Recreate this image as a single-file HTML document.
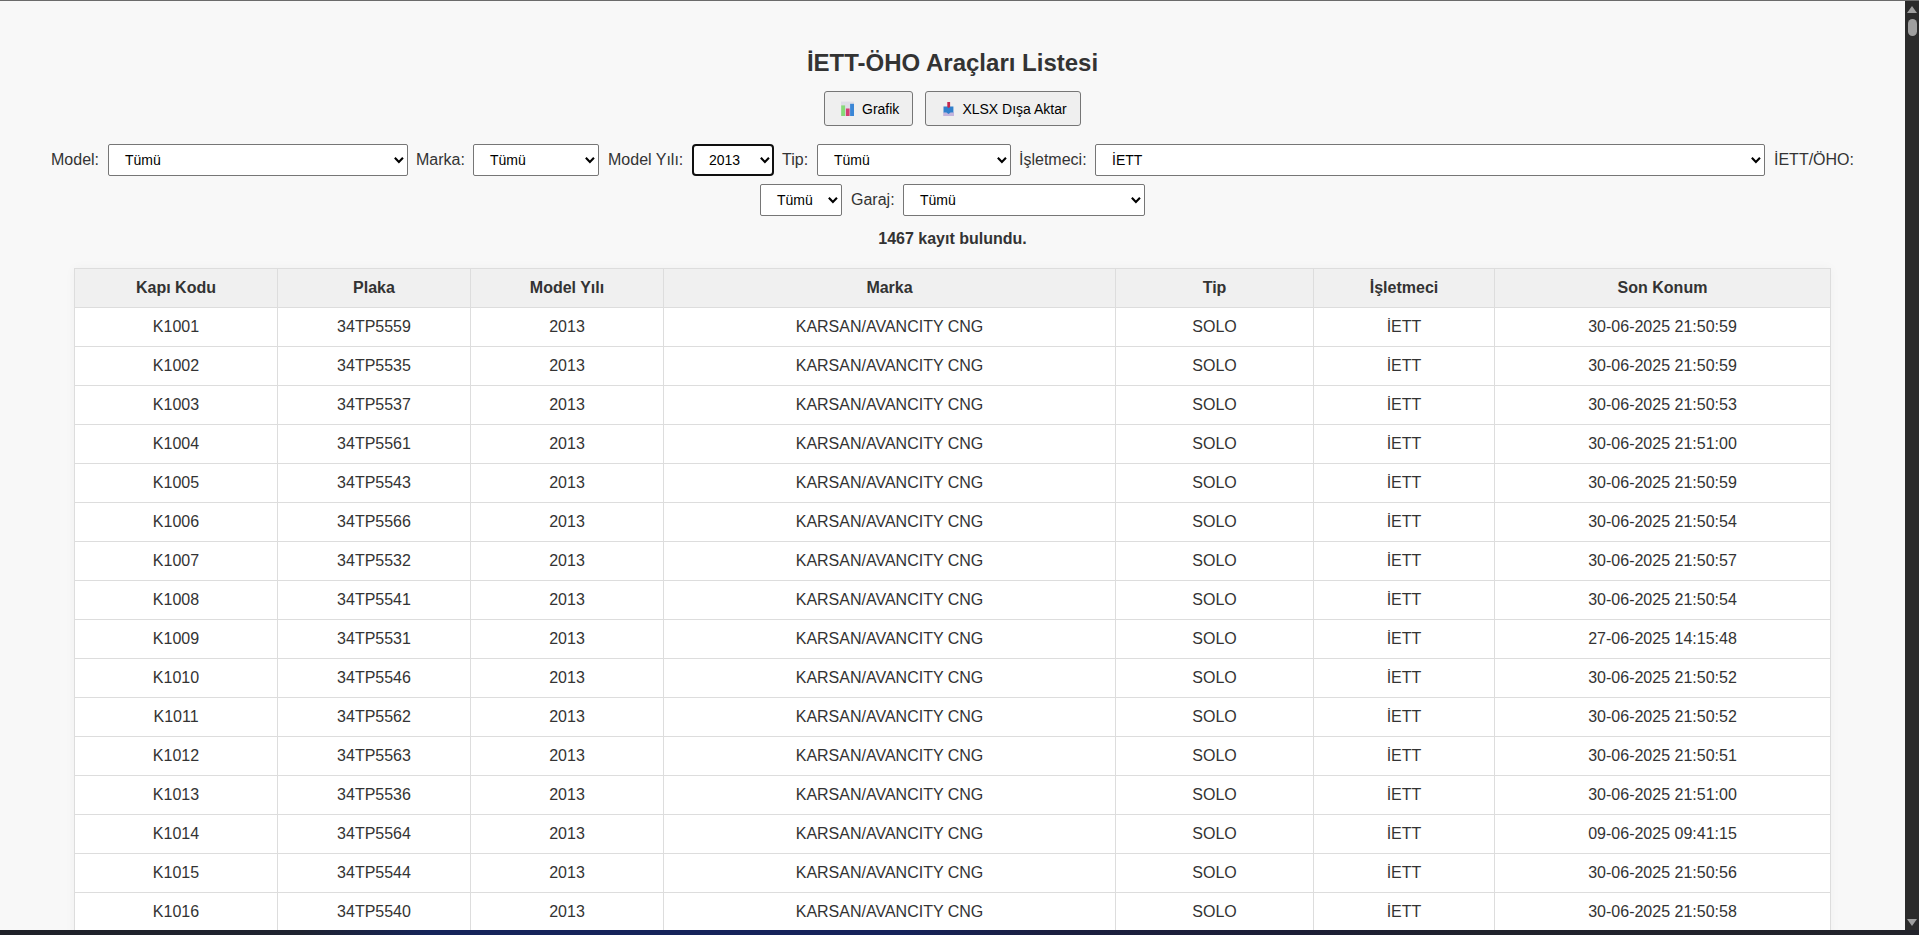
<!DOCTYPE html>
<html lang="tr">
<head>
<meta charset="utf-8">
<title>İETT-ÖHO Araçları Listesi</title>
<style>
html,body{margin:0;padding:0;}
html{width:1919px;height:935px;overflow:hidden;background:#f8f8f8;}
body{position:relative;width:1919px;height:935px;overflow:hidden;font-family:"Liberation Sans",sans-serif;color:#333;background:#f8f8f8;font-size:16px;}
#page{position:absolute;left:0;top:0;width:1905px;height:930px;overflow:hidden;}
#topline{position:absolute;left:0;top:0;width:1919px;height:1px;background:#6b6b6b;z-index:5;}
#sb{position:absolute;left:1905px;top:1px;width:14px;height:929px;background:#2b2b2b;z-index:4;}
#sb .thumb{position:absolute;left:3px;top:18px;width:9px;height:17px;border-radius:5px;background:#9f9f9f;}
#sb .up{position:absolute;left:2px;top:5px;width:0;height:0;border-left:5px solid transparent;border-right:5px solid transparent;border-bottom:7px solid #9f9f9f;}
#sb .down{position:absolute;left:2px;bottom:4px;width:0;height:0;border-left:5px solid transparent;border-right:5px solid transparent;border-top:7px solid #9f9f9f;}
#bottombar{position:absolute;left:0;top:930px;width:1919px;height:5px;background:linear-gradient(90deg,#1f2128 0,#1f2330 300px,#15245a 430px,#15225a 900px,#1b1f40 1050px,#1c1e36 1300px,#20222c 1480px,#22232b 1919px);z-index:6;}
h2{position:absolute;left:0;top:49px;width:1905px;margin:0;text-align:center;font-size:24px;line-height:27px;font-weight:bold;color:#333;}
.btn{position:absolute;box-sizing:border-box;height:35px;top:91px;border:1px solid #767676;border-radius:3px;background:#efefef;color:#000;font-family:"Liberation Sans",sans-serif;font-size:14px;padding:0;text-align:left;}
.btn svg{position:absolute;top:9px;}
.btn span{position:absolute;top:9px;line-height:16px;white-space:nowrap;}
.lbl{position:absolute;font-size:16px;line-height:18px;white-space:nowrap;color:#333;}
.sel{position:absolute;box-sizing:border-box;height:32px;border:1px solid #767676;border-radius:2px;background:#fff;color:#000;font-size:14px;line-height:30px;padding-left:16px;white-space:nowrap;}
.sel svg{position:absolute;right:3px;top:12px;}
.sel.focus{border:2px solid #101010;border-radius:4px;line-height:28px;padding-left:15px;}
.sel.focus svg{right:2px;top:11px;}
#count{position:absolute;left:0;top:230px;width:1905px;text-align:center;font-weight:bold;font-size:16px;line-height:18px;}
table{position:absolute;left:74px;top:268px;width:1756px;border-collapse:collapse;table-layout:fixed;background:#fff;box-shadow:0 0 10px rgba(0,0,0,0.04);}
th,td{border:1px solid #ddd;padding:10px;text-align:center;font-size:16px;line-height:18px;height:18px;color:#333;}
th{background:#f0f0f0;font-weight:bold;}
</style>
</head>
<body>
<div id="page">
<h2>İETT-ÖHO Araçları Listesi</h2>
<button class="btn" style="left:824px;width:89px;"><svg width="15" height="16" viewBox="0 0 15 16" style="left:15px"><rect x="1" y="0.6" width="13" height="14.4" fill="#dedee7"/><rect x="1.2" y="4.4" width="3.9" height="10.6" fill="#86da78"/><rect x="5.9" y="7.5" width="3.7" height="7.5" fill="#d43d72"/><rect x="10.1" y="2.8" width="3.9" height="12.2" fill="#3a86d6"/></svg><span style="left:37px">Grafik</span></button>
<button class="btn" style="left:925px;width:156px;"><svg width="14" height="16" viewBox="0 0 14 16" style="left:16px"><path d="M1.2 11.2 H12 V15 H1.2 Z" fill="#c3b4dd"/><path d="M1.5 5.4 H11.4 V11.6 H8.6 L6.5 13 L4.4 11.6 H1.5 Z" fill="#3080cc"/><path d="M5.3 1 H8.1 V6 L6.7 7 L5.3 6 Z" fill="#c4274f"/></svg><span style="left:36.4px">XLSX Dışa Aktar</span></button>

<span class="lbl" style="left:51px;top:151px">Model:</span>
<div class="sel" style="left:108px;top:144px;width:300px">Tümü<svg width="10" height="7" viewBox="0 0 10 7"><path d="M0.85 0.75 L4.9 5 L8.95 0.75" fill="none" stroke="#000" stroke-width="2.1"/></svg></div>
<span class="lbl" style="left:416px;top:151px">Marka:</span>
<div class="sel" style="left:473px;top:144px;width:126px">Tümü<svg width="10" height="7" viewBox="0 0 10 7"><path d="M0.85 0.75 L4.9 5 L8.95 0.75" fill="none" stroke="#000" stroke-width="2.1"/></svg></div>
<span class="lbl" style="left:608px;top:151px">Model Yılı:</span>
<div class="sel focus" style="left:692px;top:144px;width:82px">2013<svg width="10" height="7" viewBox="0 0 10 7"><path d="M0.85 0.75 L4.9 5 L8.95 0.75" fill="none" stroke="#000" stroke-width="2.1"/></svg></div>
<span class="lbl" style="left:782px;top:151px">Tip:</span>
<div class="sel" style="left:817px;top:144px;width:194px">Tümü<svg width="10" height="7" viewBox="0 0 10 7"><path d="M0.85 0.75 L4.9 5 L8.95 0.75" fill="none" stroke="#000" stroke-width="2.1"/></svg></div>
<span class="lbl" style="left:1019px;top:151px">İşletmeci:</span>
<div class="sel" style="left:1095px;top:144px;width:670px">İETT<svg width="10" height="7" viewBox="0 0 10 7"><path d="M0.85 0.75 L4.9 5 L8.95 0.75" fill="none" stroke="#000" stroke-width="2.1"/></svg></div>
<span class="lbl" style="left:1774px;top:151px">İETT/ÖHO:</span>
<div class="sel" style="left:760px;top:184px;width:82px">Tümü<svg width="10" height="7" viewBox="0 0 10 7"><path d="M0.85 0.75 L4.9 5 L8.95 0.75" fill="none" stroke="#000" stroke-width="2.1"/></svg></div>
<span class="lbl" style="left:851px;top:191px">Garaj:</span>
<div class="sel" style="left:903px;top:184px;width:242px">Tümü<svg width="10" height="7" viewBox="0 0 10 7"><path d="M0.85 0.75 L4.9 5 L8.95 0.75" fill="none" stroke="#000" stroke-width="2.1"/></svg></div>

<div id="count">1467 kayıt bulundu.</div>

<table>
<colgroup><col style="width:203px"><col style="width:193px"><col style="width:193px"><col style="width:452px"><col style="width:198px"><col style="width:181px"><col style="width:336px"></colgroup>
<thead><tr><th>Kapı Kodu</th><th>Plaka</th><th>Model Yılı</th><th>Marka</th><th>Tip</th><th>İşletmeci</th><th>Son Konum</th></tr></thead>
<tbody>
<tr><td>K1001</td><td>34TP5559</td><td>2013</td><td>KARSAN/AVANCITY CNG</td><td>SOLO</td><td>İETT</td><td>30-06-2025 21:50:59</td></tr>
<tr><td>K1002</td><td>34TP5535</td><td>2013</td><td>KARSAN/AVANCITY CNG</td><td>SOLO</td><td>İETT</td><td>30-06-2025 21:50:59</td></tr>
<tr><td>K1003</td><td>34TP5537</td><td>2013</td><td>KARSAN/AVANCITY CNG</td><td>SOLO</td><td>İETT</td><td>30-06-2025 21:50:53</td></tr>
<tr><td>K1004</td><td>34TP5561</td><td>2013</td><td>KARSAN/AVANCITY CNG</td><td>SOLO</td><td>İETT</td><td>30-06-2025 21:51:00</td></tr>
<tr><td>K1005</td><td>34TP5543</td><td>2013</td><td>KARSAN/AVANCITY CNG</td><td>SOLO</td><td>İETT</td><td>30-06-2025 21:50:59</td></tr>
<tr><td>K1006</td><td>34TP5566</td><td>2013</td><td>KARSAN/AVANCITY CNG</td><td>SOLO</td><td>İETT</td><td>30-06-2025 21:50:54</td></tr>
<tr><td>K1007</td><td>34TP5532</td><td>2013</td><td>KARSAN/AVANCITY CNG</td><td>SOLO</td><td>İETT</td><td>30-06-2025 21:50:57</td></tr>
<tr><td>K1008</td><td>34TP5541</td><td>2013</td><td>KARSAN/AVANCITY CNG</td><td>SOLO</td><td>İETT</td><td>30-06-2025 21:50:54</td></tr>
<tr><td>K1009</td><td>34TP5531</td><td>2013</td><td>KARSAN/AVANCITY CNG</td><td>SOLO</td><td>İETT</td><td>27-06-2025 14:15:48</td></tr>
<tr><td>K1010</td><td>34TP5546</td><td>2013</td><td>KARSAN/AVANCITY CNG</td><td>SOLO</td><td>İETT</td><td>30-06-2025 21:50:52</td></tr>
<tr><td>K1011</td><td>34TP5562</td><td>2013</td><td>KARSAN/AVANCITY CNG</td><td>SOLO</td><td>İETT</td><td>30-06-2025 21:50:52</td></tr>
<tr><td>K1012</td><td>34TP5563</td><td>2013</td><td>KARSAN/AVANCITY CNG</td><td>SOLO</td><td>İETT</td><td>30-06-2025 21:50:51</td></tr>
<tr><td>K1013</td><td>34TP5536</td><td>2013</td><td>KARSAN/AVANCITY CNG</td><td>SOLO</td><td>İETT</td><td>30-06-2025 21:51:00</td></tr>
<tr><td>K1014</td><td>34TP5564</td><td>2013</td><td>KARSAN/AVANCITY CNG</td><td>SOLO</td><td>İETT</td><td>09-06-2025 09:41:15</td></tr>
<tr><td>K1015</td><td>34TP5544</td><td>2013</td><td>KARSAN/AVANCITY CNG</td><td>SOLO</td><td>İETT</td><td>30-06-2025 21:50:56</td></tr>
<tr><td>K1016</td><td>34TP5540</td><td>2013</td><td>KARSAN/AVANCITY CNG</td><td>SOLO</td><td>İETT</td><td>30-06-2025 21:50:58</td></tr>
<tr><td>K1017</td><td>34TP5545</td><td>2013</td><td>KARSAN/AVANCITY CNG</td><td>SOLO</td><td>İETT</td><td>30-06-2025 21:50:55</td></tr>
</tbody>
</table>
</div>
<div id="topline"></div>
<div id="sb"><div class="up"></div><div class="thumb"></div><div class="down"></div></div>
<div id="bottombar"></div>
</body>
</html>
